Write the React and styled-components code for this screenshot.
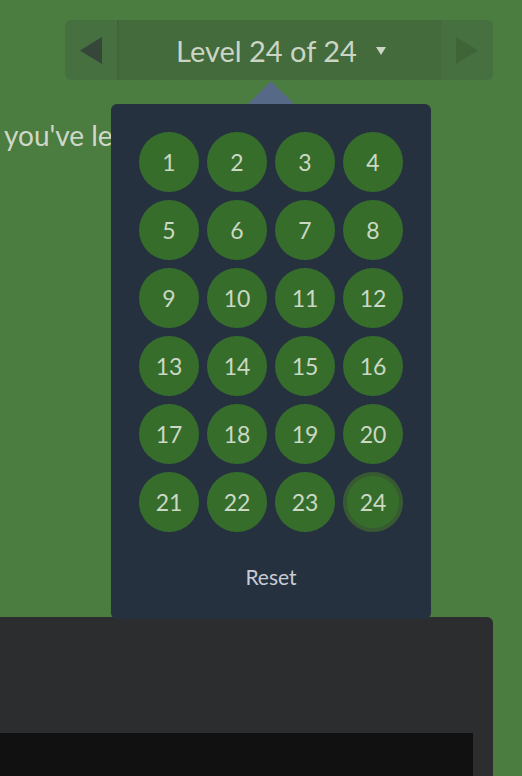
import React from "react";
import styled, { createGlobalStyle } from "styled-components";

const Global = createGlobalStyle`
  html, body { margin: 0; padding: 0; }
  body {
    background: #4b7c40;
    font-family: "Lato", "Open Sans", sans-serif;
    overflow: hidden;
  }
  #root { width: 522px; height: 776px; }
`;

const Page = styled.div`
  position: relative;
  width: 522px;
  height: 776px;
  display: flex;
  flex-direction: column;
  overflow: hidden;
`;

const Header = styled.div`
  display: flex;
  justify-content: flex-end;
  padding: 20px 29px 0 0;
`;

const Nav = styled.div`
  position: relative;
  display: flex;
  width: 428px;
  height: 60px;
  border-radius: 6px;
  background: #467040;
`;

const ArrowButton = styled.div`
  width: 52px;
  display: flex;
  align-items: center;
  justify-content: center;
  ${(p) => (p.$left ? "border-right: 2px solid #3f6538;" : "border-left: 2px solid #44693c;")}
`;

const Counter = styled.div`
  flex: 1;
  display: flex;
  align-items: center;
  justify-content: center;
  gap: 19px;
  background: #436b3b;
  color: #cbd5c4;
  font-size: 29px;
  padding-left: 4px;
`;

const Caret = styled.span`
  width: 0;
  height: 0;
  border-left: 5px solid transparent;
  border-right: 5px solid transparent;
  border-top: 8px solid #cbd5c4;
  margin-top: 2px;
`;

const Intro = styled.p`
  margin: 38px 0 0 4px;
  width: 107px;
  overflow: hidden;
  color: #cfd8c8;
  font-size: 28px;
  white-space: nowrap;
`;

const Popup = styled.div`
  position: absolute;
  left: 111px;
  top: 104px;
  width: 320px;
  box-sizing: border-box;
  padding: 28px 28px 0;
  background: #263140;
  border-radius: 6px;
  height: 515px;
  z-index: 2;
  &::before {
    content: "";
    position: absolute;
    left: 137px;
    top: -23px;
    border-left: 23px solid transparent;
    border-right: 23px solid transparent;
    border-bottom: 23px solid #566a88;
  }
`;

const Grid = styled.div`
  display: grid;
  grid-template-columns: repeat(4, 60px);
  gap: 8px;
`;

const LevelDot = styled.div`
  width: 60px;
  height: 60px;
  box-sizing: border-box;
  border-radius: 50%;
  background: #376d2b;
  color: #cad8c4;
  font-size: 23px;
  display: flex;
  align-items: center;
  justify-content: center;
  border: ${(p) => (p.$current ? "4px solid #385a31" : "none")};
`;

const Reset = styled.div`
  text-align: center;
  margin-top: 32px;
  color: #c6ccd4;
  font-size: 21px;
`;

const Panel = styled.div`
  position: absolute;
  left: 0;
  top: 617px;
  width: 493px;
  height: 170px;
  background: #2c2d2f;
  border-radius: 0 6px 0 0;
  padding-top: 116px;
  box-sizing: border-box;
`;

const Editor = styled.div`
  width: 473px;
  height: 60px;
  background: #111111;
`;

const LeftArrow = () => (
  <svg width="22" height="27" viewBox="0 0 22 27">
    <polygon points="22,0 22,27 0,13.5" fill="#36473a" />
  </svg>
);
const RightArrow = () => (
  <svg width="22" height="27" viewBox="0 0 22 27">
    <polygon points="0,0 0,27 22,13.5" fill="#3e6438" />
  </svg>
);

export default function App() {
  const levels = Array.from({ length: 24 }, (_, i) => i + 1);
  return (
    <Page>
      <Global />
      <Header>
        <Nav>
          <ArrowButton $left>
            <LeftArrow />
          </ArrowButton>
          <Counter>
            <span>Level 24 of 24</span>
            <Caret />
          </Counter>
          <ArrowButton>
            <RightArrow />
          </ArrowButton>
        </Nav>
      </Header>
      <Intro>you've learned</Intro>
      <Popup>
        <Grid>
          {levels.map((n) => (
            <LevelDot key={n} $current={n === 24}>
              {n}
            </LevelDot>
          ))}
        </Grid>
        <Reset>Reset</Reset>
      </Popup>
      <Panel>
        <Editor />
      </Panel>
    </Page>
  );
}
